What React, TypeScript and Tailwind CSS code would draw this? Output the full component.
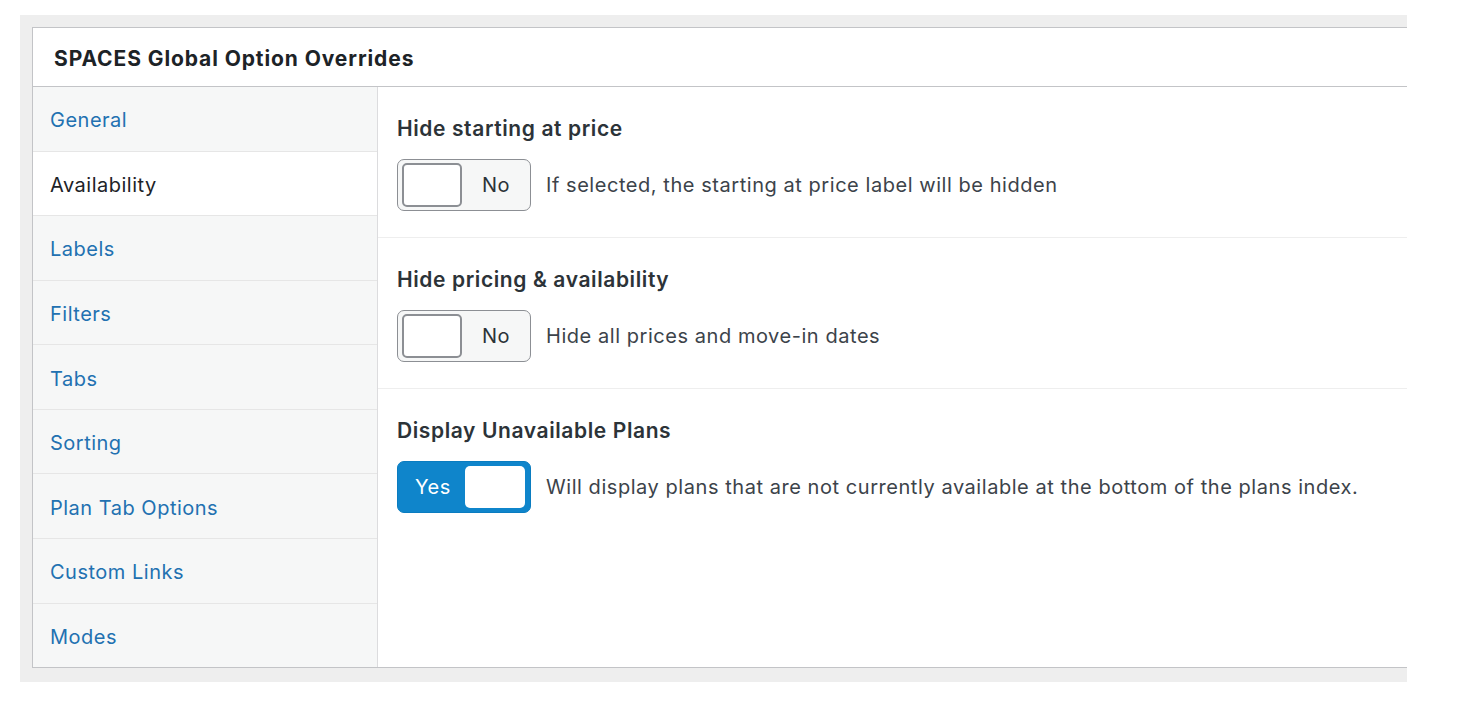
const tabs = [
  "General",
  "Availability",
  "Labels",
  "Filters",
  "Tabs",
  "Sorting",
  "Plan Tab Options",
  "Custom Links",
  "Modes",
];

const options = [
  {
    title: "Hide starting at price",
    on: false,
    help: "If selected, the starting at price label will be hidden",
  },
  {
    title: "Hide pricing & availability",
    on: false,
    help: "Hide all prices and move-in dates",
  },
  {
    title: "Display Unavailable Plans",
    on: true,
    help: "Will display plans that are not currently available at the bottom of the plans index.",
  },
];

function Toggle({ on }: { on: boolean }) {
  if (on) {
    return (
      <div className="flex h-[52px] w-[134px] shrink-0 items-center rounded-[7px] border border-[#0a7cc0] bg-[#0f85cb] p-[5px]">
        <span className="flex-1 pl-[12px] text-[20px] tracking-[0.5px] text-white">Yes</span>
        <span className="h-[42px] w-[60px] rounded-[5px] bg-white" />
      </div>
    );
  }
  return (
    <div className="flex h-[52px] w-[134px] shrink-0 items-center rounded-[7px] border border-[#8c8f94] bg-[#f6f7f7] p-[4px]">
      <span className="h-[44px] w-[60px] rounded-[5px] border-2 border-[#8c8f94] bg-white" />
      <span className="flex-1 pl-[4px] text-center text-[20px] tracking-[0.5px] text-[#2c3338]">No</span>
    </div>
  );
}

export default function App() {
  const active = "Availability";

  return (
    <div
      className="min-h-screen bg-white pl-[20px] pt-[15px]"
      style={{ fontFamily: "Inter, 'Liberation Sans', sans-serif" }}
    >
      <div className="w-[1387px] bg-[#eeeeee] pb-[14px] pl-[12px] pt-[12px]">
        <div className="border-b border-l border-t border-[#c3c4c7] bg-white">
          <div className="flex h-[59px] items-center border-b border-[#c3c4c7] pl-[21px] pt-[4px]">
            <h1 className="text-[21px] font-bold tracking-[0.9px] text-[#1d2327]">SPACES Global Option Overrides</h1>
          </div>

          <div className="flex h-[580px]">
            <ul className="flex w-[345px] shrink-0 flex-col border-r border-[#dcdcde] bg-[#f6f7f7]">
              {tabs.map((t, i) => (
                <li
                  key={t}
                  className={
                    "flex flex-1 items-center pl-[17px] pt-[3px] text-[20px] tracking-[0.5px] " +
                    (i < tabs.length - 1 ? "border-b border-[#e6e6e6] " : "") +
                    (t === active ? "bg-white text-[#1d2327]" : "text-[#2271b1]")
                  }
                >
                  {t}
                </li>
              ))}
            </ul>

            <div className="flex-1">
              {options.map((o, i) => (
                <div
                  key={o.title}
                  className={
                    "pb-[26px] pl-[19px] pt-[28px] " +
                    (i < options.length - 1 ? "border-b border-[#eeeeee]" : "")
                  }
                >
                  <h2 className="text-[21px] leading-[28px] font-semibold tracking-[0.6px] text-[#2c3338]">
                    {o.title}
                  </h2>
                  <div className="mt-[16px] flex items-center gap-[15px]">
                    <Toggle on={o.on} />
                    <p className="text-[20px] tracking-[0.55px] text-[#3c434a]">{o.help}</p>
                  </div>
                </div>
              ))}
            </div>
          </div>
        </div>
      </div>
    </div>
  );
}
